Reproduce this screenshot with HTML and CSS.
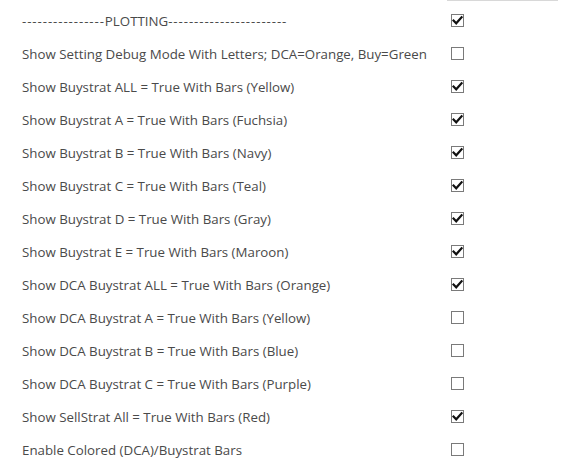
FILE: index.html
```html
<!DOCTYPE html>
<html>
<head>
<meta charset="utf-8">
<link rel="stylesheet" href="styles.css">
</head>
<body>
<div class="topline"></div>
<div class="list">
  <div class="row"><span class="label"><span class="dash">----------------</span>PLOTTING<span class="dash">-----------------------</span></span><span class="cb on"><svg viewBox="0 0 11 11"><path d="M1.5 5.5 L4.2 8.3 L9.6 2.2" /></svg></span></div>
  <div class="row"><span class="label">Show Setting Debug Mode With Letters; DCA=Orange, Buy=Green</span><span class="cb"></span></div>
  <div class="row"><span class="label">Show Buystrat ALL = True With Bars (Yellow)</span><span class="cb on"><svg viewBox="0 0 11 11"><path d="M1.5 5.5 L4.2 8.3 L9.6 2.2" /></svg></span></div>
  <div class="row"><span class="label">Show Buystrat A = True With Bars (Fuchsia)</span><span class="cb on"><svg viewBox="0 0 11 11"><path d="M1.5 5.5 L4.2 8.3 L9.6 2.2" /></svg></span></div>
  <div class="row"><span class="label">Show Buystrat B = True With Bars (Navy)</span><span class="cb on"><svg viewBox="0 0 11 11"><path d="M1.5 5.5 L4.2 8.3 L9.6 2.2" /></svg></span></div>
  <div class="row"><span class="label">Show Buystrat C = True With Bars (Teal)</span><span class="cb on"><svg viewBox="0 0 11 11"><path d="M1.5 5.5 L4.2 8.3 L9.6 2.2" /></svg></span></div>
  <div class="row"><span class="label">Show Buystrat D = True With Bars (Gray)</span><span class="cb on"><svg viewBox="0 0 11 11"><path d="M1.5 5.5 L4.2 8.3 L9.6 2.2" /></svg></span></div>
  <div class="row"><span class="label">Show Buystrat E = True With Bars (Maroon)</span><span class="cb on"><svg viewBox="0 0 11 11"><path d="M1.5 5.5 L4.2 8.3 L9.6 2.2" /></svg></span></div>
  <div class="row"><span class="label">Show DCA Buystrat ALL = True With Bars (Orange)</span><span class="cb on"><svg viewBox="0 0 11 11"><path d="M1.5 5.5 L4.2 8.3 L9.6 2.2" /></svg></span></div>
  <div class="row"><span class="label">Show DCA Buystrat A = True With Bars (Yellow)</span><span class="cb"></span></div>
  <div class="row"><span class="label">Show DCA Buystrat B = True With Bars (Blue)</span><span class="cb"></span></div>
  <div class="row"><span class="label">Show DCA Buystrat C = True With Bars (Purple)</span><span class="cb"></span></div>
  <div class="row"><span class="label">Show SellStrat All = True With Bars (Red)</span><span class="cb on"><svg viewBox="0 0 11 11"><path d="M1.5 5.5 L4.2 8.3 L9.6 2.2" /></svg></span></div>
  <div class="row"><span class="label">Enable Colored (DCA)/Buystrat Bars</span><span class="cb"></span></div>
</div>
</body>
</html>
```

FILE: styles.css
```css
html, body {
  margin: 0;
  padding: 0;
  background: #ffffff;
}
body {
  font-family: "Open Sans", "DejaVu Sans", sans-serif;
  font-size: 13.3px;
  color: #4a4a4a;
  width: 570px;
  height: 467px;
  overflow: hidden;
}
.topline {
  margin-left: 447px;
  width: 111px;
  height: 1px;
  background: #d8d8d8;
}
.list {
  padding-top: 3px;
  padding-left: 22px;
}
.row {
  display: grid;
  grid-template-columns: 429px 13px;
  align-items: center;
  height: 33px;
}
.label {
  white-space: nowrap;
}
.dash {
  letter-spacing: 0.9px;
}
.cb {
  box-sizing: border-box;
  width: 13px;
  height: 13px;
  border: 1px solid #7a7a7a;
  background: #fff;
  display: block;
}
.cb svg {
  display: block;
  width: 11px;
  height: 11px;
}
.cb svg path {
  fill: none;
  stroke: #111;
  stroke-width: 2.2;
  stroke-linecap: square;
  stroke-linejoin: miter;
}
```
